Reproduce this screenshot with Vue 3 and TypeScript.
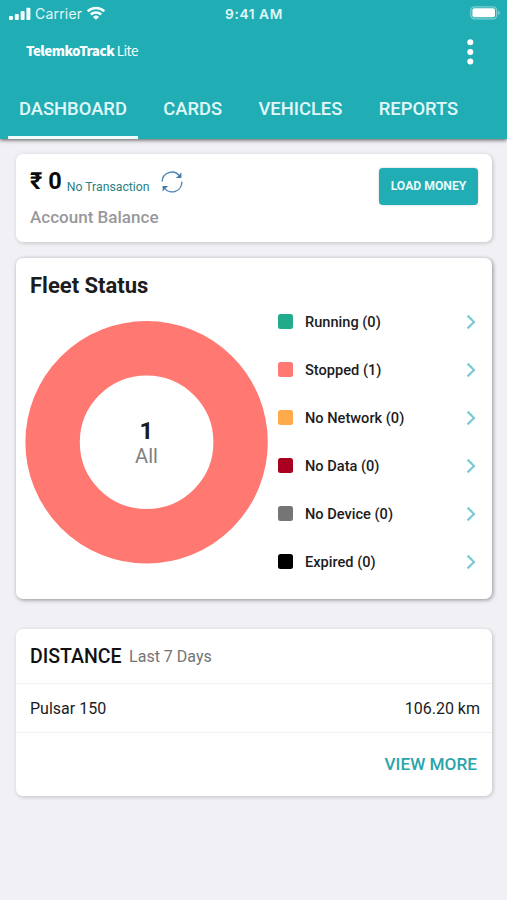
<script setup lang="ts">
interface FleetStatus {
  label: string
  count: number
  color: string
}

const tabs: string[] = ['DASHBOARD', 'CARDS', 'VEHICLES', 'REPORTS']
const activeTab = 'DASHBOARD'

const statuses: FleetStatus[] = [
  { label: 'Running', count: 0, color: '#22ab8b' },
  { label: 'Stopped', count: 1, color: '#ff7872' },
  { label: 'No Network', count: 0, color: '#ffab4c' },
  { label: 'No Data', count: 0, color: '#aa0020' },
  { label: 'No Device', count: 0, color: '#757575' },
  { label: 'Expired', count: 0, color: '#000000' },
]
</script>

<template>
  <div class="screen">
    <header class="header">
      <div class="status-bar">
        <div class="carrier">
          <svg class="signal" viewBox="0 0 22 14" width="22" height="14">
            <rect x="0" y="9" width="4" height="4" rx="1" />
            <rect x="5.8" y="7" width="4" height="6" rx="1" />
            <rect x="11.6" y="3.9" width="4" height="9.1" rx="1" />
            <rect x="17.4" y="0.7" width="4" height="12.3" rx="1" />
          </svg>
          <span class="carrier-name">Carrier</span>
          <svg class="wifi" viewBox="0 0 20 14" width="20" height="14">
            <path d="M1.7 5.3 A12.2 12.2 0 0 1 18.3 5.3" />
            <path d="M4.8 8.5 A7.6 7.6 0 0 1 15.2 8.5" />
            <path class="wifi-dot" d="M10 13.8 L6.9 10.9 A4.5 4.5 0 0 1 13.1 10.9 Z" />
          </svg>
        </div>
        <span class="clock">9:41 AM</span>
        <svg class="battery" viewBox="0 0 31 14" width="31" height="14">
          <rect class="battery-shell" x="0.8" y="0.8" width="25.8" height="12" rx="3.6" />
          <rect class="battery-level" x="2.4" y="2.3" width="22.6" height="9" rx="2" />
          <path class="battery-tip" d="M28 4.8 Q29.8 5.4 29.8 6.9 Q29.8 8.4 28 9 Z" />
        </svg>
      </div>
      <div class="app-bar">
        <h1 class="brand"><b>TelemkoTrack</b> <span>Lite</span></h1>
        <svg class="more" viewBox="0 0 8 28" width="8" height="28">
          <circle cx="4.3" cy="4.3" r="3" />
          <circle cx="4.3" cy="13.9" r="3" />
          <circle cx="4.3" cy="23.5" r="3" />
        </svg>
      </div>
      <nav class="tabs">
        <a v-for="tab in tabs" :key="tab" class="tab" :class="{ active: tab === activeTab }">{{ tab }}</a>
      </nav>
    </header>

    <main class="content">
      <section class="card balance">
        <div class="balance-info">
          <div class="balance-row">
            <span class="amount">₹ 0</span>
            <span class="transaction">No Transaction</span>
            <svg class="refresh" viewBox="0 0 22 22" width="22" height="22">
              <path d="M1.2 10.6 A9.6 9.6 0 0 1 18.6 5.2" />
              <path d="M20.8 10.8 A9.6 9.6 0 0 1 3.4 16.8" />
              <path class="arrow" d="M20.4 1.2 V7 H14.6 L17.6 4.8 Z" />
              <path class="arrow" d="M1.6 20.6 V15 H7.4 L4.4 17.2 Z" />
            </svg>
          </div>
          <div class="balance-label">Account Balance</div>
        </div>
        <button class="load">LOAD MONEY</button>
      </section>

      <section class="card fleet">
        <h2 class="fleet-title">Fleet Status</h2>
        <div class="fleet-body">
          <div class="donut">
            <svg class="ring" viewBox="0 0 243 243" width="243" height="243">
              <circle cx="121.6" cy="121.2" r="94" />
            </svg>
            <div class="donut-text">
              <strong class="total">1</strong>
              <span class="total-label">All</span>
            </div>
          </div>
          <ul class="legend">
            <li v-for="s in statuses" :key="s.label" class="legend-row">
              <span class="swatch" :style="{ background: s.color }"></span>
              <span class="legend-text">{{ s.label }} ({{ s.count }})</span>
              <svg class="chevron" viewBox="0 0 10 16" width="10" height="16">
                <path d="M1.6 1.6 L8 8 L1.6 14.4" />
              </svg>
            </li>
          </ul>
        </div>
      </section>

      <section class="card distance">
        <div class="distance-head">
          <h2 class="distance-title">DISTANCE</h2>
          <span class="distance-period">Last 7 Days</span>
        </div>
        <div class="distance-row">
          <span class="vehicle">Pulsar 150</span>
          <span class="km">106.20 km</span>
        </div>
        <div class="distance-foot"><a class="view-more">VIEW MORE</a></div>
      </section>
    </main>
  </div>
</template>

<style>
body {
  background: #f0f0f5;
}
</style>

<style scoped>
.screen {
  box-sizing: border-box;
  width: 100%;
  height: 900px;
  overflow: hidden;
  background: #f0f0f5;
  color: #1c1c1e;
  font-family: Roboto, 'Liberation Sans', sans-serif;
}
h1,
h2,
ul {
  margin: 0;
  padding: 0;
  font-weight: 500;
  list-style: none;
}
svg {
  display: block;
  flex: none;
}
.header {
  display: flex;
  flex-direction: column;
  height: 139px;
  background: #20adb3;
  color: #fff;
  box-shadow: 0 1px 4px rgba(0, 0, 0, 0.65);
}
.status-bar {
  display: grid;
  grid-template-columns: 1fr auto 1fr;
  align-items: center;
  height: 27px;
  padding: 0 6px 0 9px;
  font-family: Inter, Roboto, sans-serif;
  color: #e2f7f8;
}
.carrier {
  display: flex;
  align-items: center;
}
.signal {
  fill: #f4fdfd;
}
.carrier-name {
  margin-left: 4px;
  font-size: 14px;
  letter-spacing: 0.2px;
}
.wifi {
  margin-left: 4px;
  margin-top: -2px;
  fill: none;
  stroke: #f4fdfd;
  stroke-width: 2.5;
}
.wifi-dot {
  fill: #f4fdfd;
  stroke: none;
}
.clock {
  margin-left: -2px;
  font-size: 13.7px;
  font-weight: 600;
  letter-spacing: 0.6px;
}
.battery {
  justify-self: end;
  margin-top: -1px;
}
.battery-shell {
  fill: none;
  stroke: #7dd0d4;
  stroke-width: 1.3;
}
.battery-level {
  fill: #fff;
}
.battery-tip {
  fill: #7dd0d4;
}
.app-bar {
  display: flex;
  align-items: center;
  justify-content: space-between;
  height: 50px;
  padding: 0 33px 0 26px;
}
.brand {
  margin-top: -5px;
  font-family: 'Noto Sans CJK SC', 'Noto Sans', sans-serif;
  font-size: 13.4px;
  line-height: 20px;
  letter-spacing: -0.5px;
  font-weight: 400;
}
.brand b {
  font-weight: 900;
}
.more {
  fill: #fff;
}
.tabs {
  display: flex;
  gap: 14.4px;
  height: 62px;
  padding-left: 8px;
}
.tab {
  box-sizing: border-box;
  padding: 0 11px;
  border-bottom: 3px solid transparent;
  font-size: 18.37px;
  font-weight: 500;
  line-height: 64px;
  color: #e0f8f9;
}
.tab.active {
  border-bottom-color: #f2fcfc;
}
.content {
  padding: 15px 15px 0 16px;
}
.card {
  box-sizing: border-box;
  border-radius: 7px;
  background: #fff;
  box-shadow: 1px 1px 4px rgba(0, 0, 0, 0.2);
}
.balance {
  display: flex;
  justify-content: space-between;
  align-items: flex-start;
  height: 88px;
  padding: 12px 14px 0;
}
.balance-row {
  display: flex;
  align-items: flex-start;
  height: 32px;
}
.amount {
  font-size: 23.5px;
  font-weight: 700;
  line-height: 31px;
  color: #0a0a0a;
}
.transaction {
  margin-left: 5px;
  padding-top: 11px;
  font-size: 12.25px;
  line-height: 20px;
  color: #2c7f82;
}
.refresh {
  margin-top: 5px;
  margin-left: 11.5px;
  fill: none;
  stroke: #4d86b5;
  stroke-width: 1.4;
}
.arrow {
  fill: #3f7bae;
  stroke: none;
}
.balance-label {
  margin-top: 8px;
  font-size: 17.05px;
  font-weight: 500;
  line-height: 22px;
  color: #98989b;
}
.load {
  width: 99px;
  height: 37px;
  margin-top: 2px;
  padding: 0;
  border: 0;
  border-radius: 4px;
  background: #20adb3;
  box-shadow: 0 0 2px rgba(0, 0, 0, 0.25);
  color: #e8fafa;
  font: 700 12.2px/37px Roboto, sans-serif;
}
.fleet {
  height: 341px;
  margin-top: 16px;
  padding: 12px 16px 0 9px;
  box-shadow: 1px 1px 4px rgba(0, 0, 0, 0.4);
}
.fleet-title {
  padding-left: 5px;
  font-size: 22px;
  font-weight: 700;
  line-height: 31px;
}
.fleet-body {
  display: flex;
  align-items: flex-start;
}
.donut {
  display: grid;
  place-items: center;
  flex: none;
  width: 243px;
  height: 243px;
  margin-top: 20px;
}
.ring,
.donut-text {
  grid-area: 1 / 1;
}
.ring {
  fill: none;
  stroke: #ff7872;
  stroke-width: 54.4;
}
.donut-text {
  display: flex;
  flex-direction: column;
  align-items: center;
  padding-top: 1px;
}
.total {
  font-size: 24px;
  font-weight: 700;
  line-height: 26px;
}
.total-label {
  font-size: 20px;
  line-height: 24px;
  color: #808080;
}
.legend {
  flex: 1;
  margin-left: 10px;
  margin-top: -3px;
}
.legend-row {
  display: flex;
  align-items: center;
  height: 48px;
}
.swatch {
  width: 15px;
  height: 15px;
  margin-top: -1px;
  border-radius: 2.5px;
}
.legend-text {
  flex: 1;
  margin-left: 12px;
  font-size: 14.6px;
  font-weight: 500;
}
.chevron {
  fill: none;
  stroke: #7accd1;
  stroke-width: 2.2;
}
.distance {
  height: 167px;
  margin-top: 30px;
}
.distance-head {
  box-sizing: border-box;
  display: flex;
  align-items: flex-start;
  height: 55px;
  padding: 14px 14px 0;
  border-bottom: 1px solid #f0f0f2;
}
.distance-title {
  font-size: 19.5px;
  line-height: 27px;
  color: #111;
}
.distance-period {
  margin-left: 7.5px;
  font-size: 16px;
  line-height: 27px;
  color: #747474;
}
.distance-row {
  box-sizing: border-box;
  display: flex;
  align-items: center;
  justify-content: space-between;
  height: 49px;
  padding: 0 12px 0 14px;
  border-bottom: 1px solid #f0f0f2;
  font-size: 16px;
}
.distance-foot {
  display: flex;
  align-items: center;
  justify-content: flex-end;
  height: 61px;
  padding-right: 15px;
}
.view-more {
  font-size: 17.2px;
  font-weight: 500;
  color: #2aa5ab;
}
</style>
